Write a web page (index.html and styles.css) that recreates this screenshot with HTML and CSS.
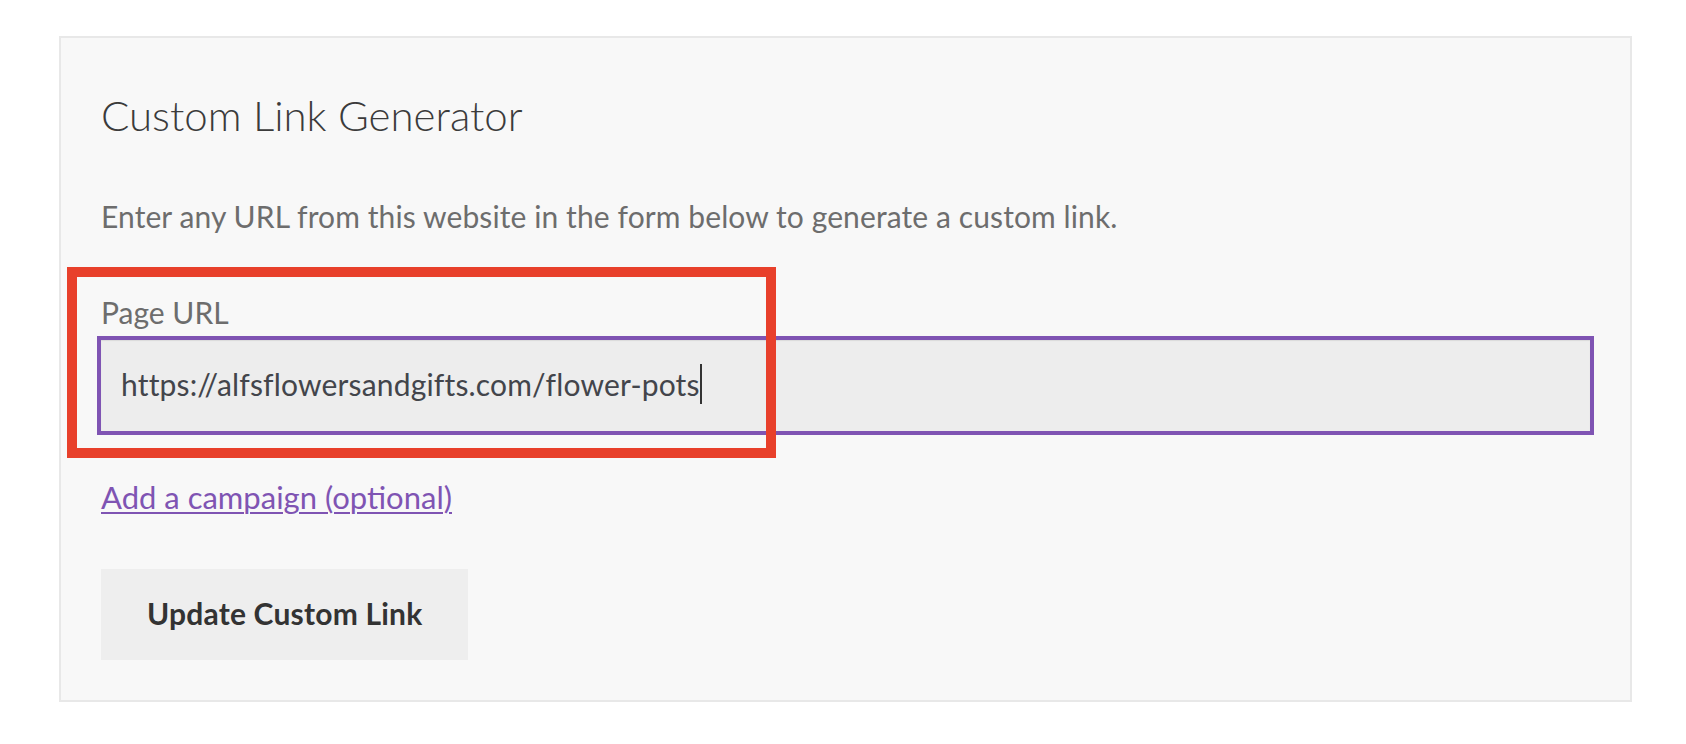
FILE: index.html
```html
<!DOCTYPE html>
<html lang="en">
<head>
<meta charset="utf-8">
<title>Custom Link Generator</title>
<link rel="stylesheet" href="styles.css">
</head>
<body>
  <section class="panel">
    <h2 class="panel-title">Custom Link Generator</h2>
    <p class="panel-intro">Enter any URL from this website in the form below to generate a custom link.</p>
    <div class="field">
      <label class="field-label" for="page-url">Page URL</label>
      <div class="field-input" id="page-url" role="textbox"><span class="field-value">https://alfsflowersandgifts.com/flower-pots</span><span class="caret"></span></div>
      <div class="highlight"></div>
    </div>
    <a class="campaign-link" href="#">Add a campaign (optional)</a>
    <div class="actions">
      <button class="btn" type="button">Update Custom Link</button>
    </div>
  </section>
</body>
</html>
```
FILE: styles.css
```css
html, body {
  margin: 0;
  padding: 0;
  background: #ffffff;
}

body {
  font-family: Lato, "Open Sans", sans-serif;
}

.panel {
  margin: 36px 54px 0 59px;
  background: #f8f8f8;
  border: 2px solid #e8e8e8;
  padding: 52px 40px 40px 40px;
}

.panel-title {
  margin: 0;
  font-size: 42px;
  line-height: 50px;
  font-weight: 300;
  color: #3b3b3b;
}

.panel-intro {
  margin: 56px 0 0 0;
  font-size: 30px;
  line-height: 40px;
  letter-spacing: 0.1px;
  color: #6d6d6d;
}

.field {
  position: relative;
  margin-top: 56px;
}

.field-label {
  display: block;
  font-size: 30px;
  line-height: 40px;
  color: #6d6d6d;
}

.field-input {
  margin: 4px -4px 0 -4px;
  border: 4px solid #7f54b3;
  background: #ededed;
  box-shadow: inset 0 1px 1px rgba(0, 0, 0, 0.08);
  padding: 24px 20px 27px 20px;
  font-size: 30px;
  line-height: 40px;
  letter-spacing: 0.17px;
  color: #43454b;
  display: flex;
  align-items: center;
}

.caret {
  display: inline-block;
  width: 2px;
  height: 40px;
  background: #333333;
}

.highlight {
  position: absolute;
  left: -34px;
  top: -25px;
  width: 689px;
  height: 171px;
  border: 10px solid #e8402b;
  pointer-events: none;
}

.campaign-link {
  display: inline-block;
  margin-top: 42px;
  font-size: 31px;
  line-height: 40px;
  color: #7f54b3;
  text-decoration: underline;
  text-decoration-thickness: 2px;
  text-underline-offset: 3px;
}

.actions {
  margin-top: 52px;
  display: flex;
}

.btn {
  border: 0;
  background: #eeeeee;
  color: #333333;
  font-family: Lato, "Open Sans", sans-serif;
  font-size: 30px;
  line-height: 40px;
  font-weight: 700;
  letter-spacing: 0.2px;
  padding: 24px 46px 27px 46px;
  cursor: pointer;
}
```
